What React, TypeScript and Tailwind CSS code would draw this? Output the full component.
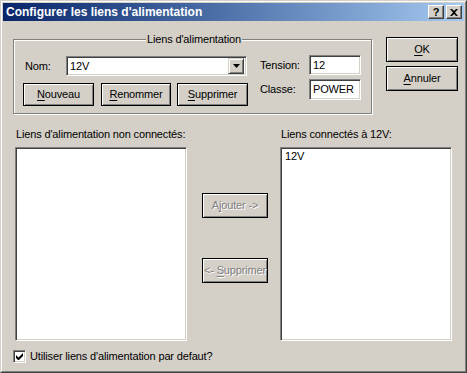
import React from 'react';

const font = "font-['Liberation_Sans',Arial,sans-serif] text-[11px] leading-[13px] tracking-[-0.15px] text-black";

const raised =
  'border border-black bg-[#d4d0c8] shadow-[inset_1px_1px_0_#fff,inset_-1px_-1px_0_#808080]';
const sunken =
  'border border-t-[#808080] border-l-[#808080] border-b-white border-r-white bg-white shadow-[inset_1px_1px_0_#404040,inset_-1px_-1px_0_#d4d0c8]';

function Btn({
  label,
  u,
  w,
  h = 'h-[23px]',
  disabled = false,
}: {
  label: string;
  u: number;
  w: string;
  h?: string;
  disabled?: boolean;
}) {
  const before = label.slice(0, u);
  const ch = label.charAt(u);
  const after = label.slice(u + 1);
  return (
    <div className={`${raised} ${w} ${h} flex items-center justify-center overflow-hidden`}>
      <span
        className={
          disabled
            ? 'text-[#808080] [text-shadow:1px_1px_0_#fff] whitespace-nowrap'
            : 'whitespace-nowrap'
        }
      >
        {before}
        <span className="underline underline-offset-2">{ch}</span>
        {after}
      </span>
    </div>
  );
}

function TitleBtn({ children }: { children: React.ReactNode }) {
  return (
    <div className="w-[16px] h-[14px] bg-[#d4d0c8] border border-t-white border-l-white border-b-[#404040] border-r-[#404040] shadow-[inset_-1px_-1px_0_#808080] flex items-center justify-center">
      {children}
    </div>
  );
}

export default function App() {
  return (
    <div className={`${font} w-[467px] h-[373px] bg-[#d4d0c8] border border-t-[#d4d0c8] border-l-[#d4d0c8] border-b-[#404040] border-r-[#404040]`}>
      <div className="h-full border border-t-white border-l-white border-b-[#808080] border-r-[#808080] p-px flex flex-col">
        {/* Title bar */}
        <div className="h-[18px] bg-gradient-to-r from-[#0a246a] to-[#a6caf0] flex items-center pl-[3px] pr-[2px]">
          <span className="text-white font-bold text-[12px] leading-[16px] flex-1 tracking-[0px]">
            Configurer les liens d'alimentation
          </span>
          <div className="flex gap-[2px]">
            <TitleBtn>
              <span className="font-bold text-[11px] leading-none">?</span>
            </TitleBtn>
            <TitleBtn>
              <svg width="8" height="7" viewBox="0 0 8 7">
                <path d="M0 0h2l2 2 2-2h2L5 3.5 8 7H6L4 5 2 7H0l3-3.5z" fill="#000" />
              </svg>
            </TitleBtn>
          </div>
        </div>

        {/* Client area */}
        <div className="flex-1 flex flex-col">
          <div className="flex">
            {/* Group box */}
            <div className="ml-[10px] mt-[18px] w-[359px] h-[75px] relative border border-[#808080] shadow-[inset_1px_1px_0_#fff,1px_1px_0_#fff] flex">
              <span className="absolute -top-[7px] left-[132px] px-[1px] bg-[#d4d0c8] whitespace-nowrap">Liens d'alimentation</span>
              <div className="w-[246px] pl-[9px] pt-[16px] flex flex-col">
                <div className="h-[20px] flex items-center">
                  <span className="w-[43px] pl-[2px]">Nom:</span>
                  <div className={`${sunken} w-[181px] h-[20px] flex items-center pl-[3px] pr-[2px]`}>
                    <span className="flex-1">12V</span>
                    <div className="w-[16px] h-[16px] bg-[#d4d0c8] border border-t-[#d4d0c8] border-l-[#d4d0c8] border-b-[#404040] border-r-[#404040] shadow-[inset_1px_1px_0_#fff,inset_-1px_-1px_0_#808080] flex items-center justify-center">
                      <svg width="7" height="4" viewBox="0 0 7 4">
                        <path d="M0 0h7L3.5 4z" fill="#000" />
                      </svg>
                    </div>
                  </div>
                </div>
                <div className="flex mt-[7px]">
                  <Btn label="Nouveau" u={0} w="w-[71px]" />
                  <div className="ml-[7px]">
                    <Btn label="Renommer" u={0} w="w-[70px]" />
                  </div>
                  <div className="ml-[6px]">
                    <Btn label="Supprimer" u={0} w="w-[71px]" />
                  </div>
                </div>
              </div>
              <div className="pt-[15px] flex flex-col">
                <div className="flex items-center h-[20px]">
                  <span className="w-[49px]">Tension:</span>
                  <div className={`${sunken} w-[52px] h-[20px] flex items-center pl-[3px]`}>12</div>
                </div>
                <div className="flex items-center h-[21px] mt-[4px]">
                  <span className="w-[49px]">Classe:</span>
                  <div className={`${sunken} w-[52px] h-[21px] flex items-center pl-[3px]`}>POWER</div>
                </div>
              </div>
            </div>

            {/* OK / Annuler */}
            <div className="ml-[14px] mt-[16px] flex flex-col gap-[4px]">
              <Btn label="OK" u={0} w="w-[72px]" h="h-[25px]" />
              <Btn label="Annuler" u={0} w="w-[72px]" h="h-[25px]" />
            </div>
          </div>

          {/* Lists */}
          <div className="mt-[14px] ml-[12px] grid grid-cols-[172px_93px_172px]">
            <span className="pl-[1px] h-[13px] whitespace-nowrap">Liens d'alimentation non connectés:</span>
            <span />
            <span className="pl-[1px] h-[13px] whitespace-nowrap">Liens connectés à 12V:</span>

            <div className={`${sunken} mt-[6px] h-[194px]`} />
            <div className="mt-[6px] pl-[15px] pt-[46px] flex flex-col gap-[40px]">
              <Btn label="Ajouter ->" u={1} w="w-[66px]" h="h-[25px]" disabled />
              <Btn label="<- Supprimer" u={3} w="w-[66px]" h="h-[25px]" disabled />
            </div>
            <div className={`${sunken} mt-[6px] h-[194px] pl-[4px] pt-[2px]`}>12V</div>
          </div>

          {/* Checkbox */}
          <div className="mt-[9px] ml-[10px] flex items-center gap-[4px]">
            <div className={`${sunken} w-[13px] h-[13px] flex items-center justify-center`}>
              <svg width="7" height="7" viewBox="0 0 7 7">
                <path d="M0 2v3l2 2h1l4-4V0L2.5 4.5z" fill="#000" />
              </svg>
            </div>
            <span>Utiliser liens d'alimentation par defaut?</span>
          </div>
        </div>
      </div>
    </div>
  );
}
